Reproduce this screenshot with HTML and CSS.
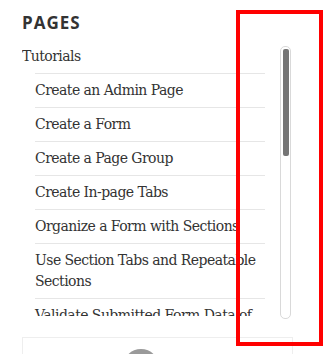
FILE: index.html
```html
<!DOCTYPE html>
<html>
<head>
<meta charset="utf-8">
<link rel="stylesheet" href="styles.css">
</head>
<body>
<div class="widget">
  <h2 class="widget-title">PAGES</h2>
  <div class="scroller">
    <div class="scroll-content">
      <ul class="pages">
        <li class="parent">Tutorials
          <ul class="children">
            <li>Create an Admin Page</li>
            <li>Create a Form</li>
            <li>Create a Page Group</li>
            <li>Create In-page Tabs</li>
            <li>Organize a Form with Sections</li>
            <li>Use Section Tabs and Repeatable Sections</li>
            <li>Validate Submitted Form Data of</li>
          </ul>
        </li>
      </ul>
    </div>
    <div class="track"><div class="thumb"></div></div>
  </div>
  <div class="card">
    <div class="avatar"></div>
  </div>
</div>
<div class="highlight"></div>
</body>
</html>
```
FILE: styles.css
```css
html, body {
  margin: 0;
  padding: 0;
  background: #fff;
}
body {
  width: 336px;
  height: 354px;
  overflow: hidden;
  position: relative;
}
.widget {
  padding: 11px 0 0 22px;
  width: 271px;
}
.widget-title {
  margin: 0 0 11px;
  font-family: "Open Sans", sans-serif;
  font-weight: 700;
  font-size: 17px;
  line-height: 24px;
  letter-spacing: 1px;
  color: #333;
}
.scroller {
  display: flex;
  height: 270px;
  gap: 15px;
}
.scroll-content {
  width: 243px;
  height: 270px;
  overflow: hidden;
}
.pages, .children {
  list-style: none;
  margin: 0;
  padding: 0;
}
.pages {
  font-family: "DejaVu Serif", serif;
  font-size: 14px;
  letter-spacing: -0.55px;
  line-height: 21px;
  color: #333;
}
.parent {
  padding: 0;
}
.children {
  margin-top: 6px;
  padding-left: 13px;
}
.children li {
  border-top: 1px solid #e6e6e6;
  padding: 6px 0;
}
.track {
  width: 7px;
  height: 267px;
  border: 1px solid #d9d9d9;
  border-radius: 5px;
  padding: 2px 1px;
  box-sizing: content-box;
}
.thumb {
  height: 107px;
  background: #757575;
  border-radius: 2px;
  margin: 0 auto;
  width: 6px;
}
.card {
  margin-top: 21px;
  border: 1px solid #eee;
  height: 40px;
  padding: 11px 0 0 100px;
}
.avatar {
  width: 36px;
  height: 36px;
  border-radius: 50%;
  background: #9a9a9a;
}
.highlight {
  position: absolute;
  left: 236px;
  top: 10px;
  width: 79px;
  height: 328px;
  border: 4px solid #ff0000;
}
```
